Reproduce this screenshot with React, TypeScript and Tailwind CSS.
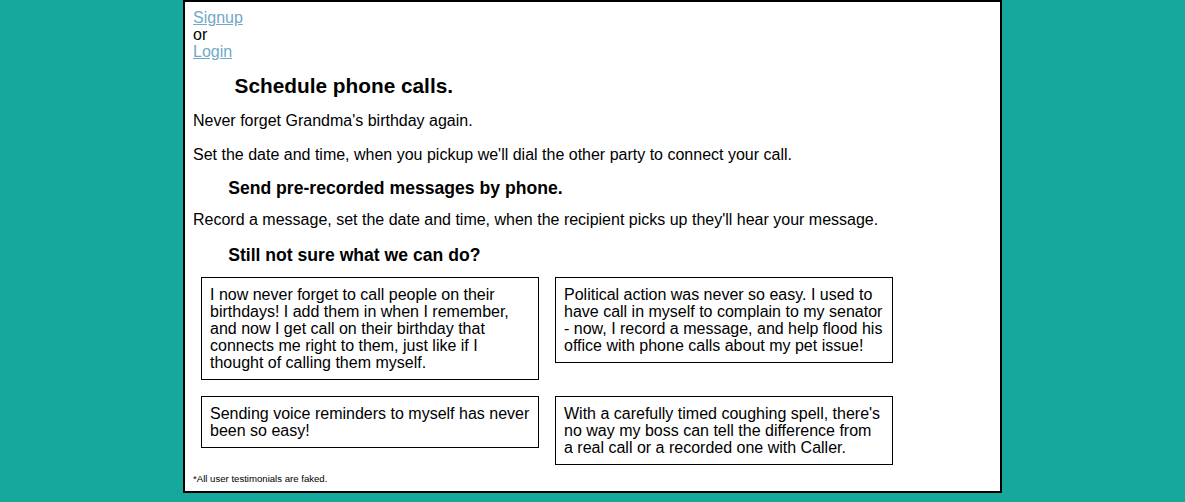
const TESTIMONIALS = [
  "I now never forget to call people on their birthdays! I add them in when I remember, and now I get call on their birthday that connects me right to them, just like if I thought of calling them myself.",
  "Political action was never so easy. I used to have call in myself to complain to my senator - now, I record a message, and help flood his office with phone calls about my pet issue!",
  "Sending voice reminders to myself has never been so easy!",
  "With a carefully timed coughing spell, there's no way my boss can tell the difference from a real call or a recorded one with Caller.",
];

export default function App() {
  return (
    <div
      className="min-h-screen bg-[#16a79d] text-black"
      style={{ fontFamily: '"Liberation Sans", Arial, Helvetica, sans-serif' }}
    >
      <div className="mx-auto w-[819px] border-2 border-black bg-white px-[8px] pb-[7px] pt-[7px]">
        {/* Auth links */}
        <div className="text-[16px] leading-[17px]">
          <a href="#" className="block w-fit text-[#72a8c9] underline">
            Signup
          </a>
          <div>or</div>
          <a href="#" className="block w-fit text-[#72a8c9] underline">
            Login
          </a>
        </div>

        <h2 className="mt-[14px] pl-[41.6px] text-[20.8px] font-bold leading-[23px]">
          Schedule phone calls.
        </h2>
        <p className="mt-[15px] text-[16px] leading-[17px]">Never forget Grandma's birthday again.</p>
        <p className="mt-[17px] text-[16px] leading-[17px]">
          Set the date and time, when you pickup we'll dial the other party to connect your call.
        </p>

        <h3 className="mt-[15px] pl-[35.2px] text-[17.6px] font-bold leading-[21px]">
          Send pre-recorded messages by phone.
        </h3>
        <p className="mt-[12px] text-[16px] leading-[17px]">
          Record a message, set the date and time, when the recipient picks up they'll hear your message.
        </p>

        <h3 className="mt-[17px] pl-[35.2px] text-[17.6px] font-bold leading-[21px]">
          Still not sure what we can do?
        </h3>

        {/* Testimonials */}
        <div className="ml-[8px] mt-[11px] grid grid-cols-[338px_338px] items-start gap-4">
          {TESTIMONIALS.map((t) => (
            <div key={t} className="border border-black p-2 text-[16px] leading-[17px]">
              {t}
            </div>
          ))}
        </div>

        <p className="mt-[8px] text-[9.6px] leading-[11px]">*All user testimonials are faked.</p>
      </div>
    </div>
  );
}
